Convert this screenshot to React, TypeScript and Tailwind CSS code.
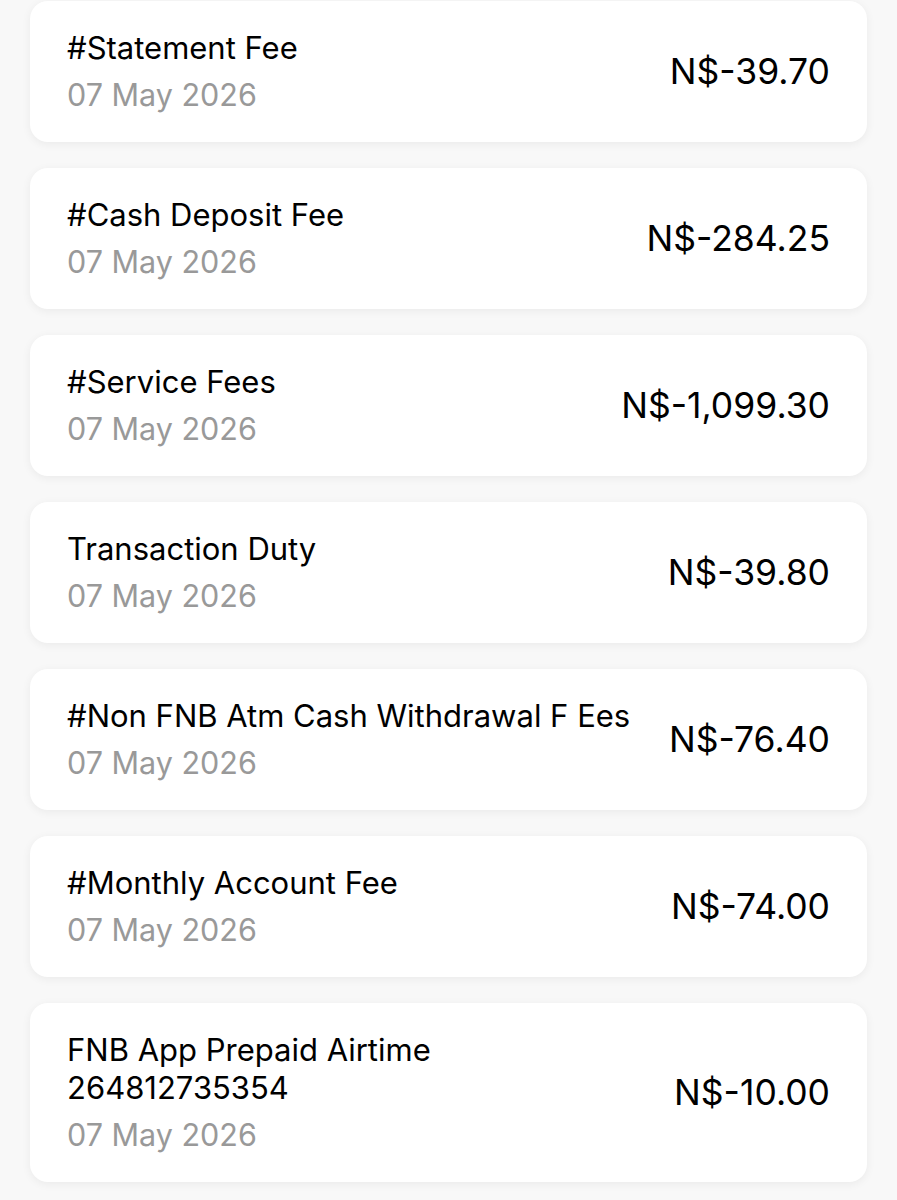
const rows = [
  { title: ["#Statement Fee"], amount: "N$-39.70" },
  { title: ["#Cash Deposit Fee"], amount: "N$-284.25" },
  { title: ["#Service Fees"], amount: "N$-1,099.30" },
  { title: ["Transaction Duty"], amount: "N$-39.80" },
  { title: ["#Non FNB Atm Cash Withdrawal F Ees"], amount: "N$-76.40" },
  { title: ["#Monthly Account Fee"], amount: "N$-74.00" },
  { title: ["FNB App Prepaid Airtime", "264812735354"], amount: "N$-10.00" },
];

const TxCard = ({ title, amount }: { title: string[]; amount: string }) => (
  <div className="flex min-h-[141px] items-center justify-between gap-4 rounded-[18px] bg-white py-[28px] pl-[37px] pr-[37px] shadow-[0_2px_10px_rgba(0,0,0,0.06)]">
    <div className="flex min-w-0 flex-col">
      {title.map((t) => (
        <p key={t} className="whitespace-nowrap text-[31px] leading-[38px] text-black">
          {t}
        </p>
      ))}
      <p className="mt-[9px] text-[30.5px] leading-[38px] text-[#999999]">07 May 2026</p>
    </div>
    <p className="shrink-0 text-[35.5px] leading-[42px] text-black">{amount}</p>
  </div>
);

export default function App() {
  return (
    <div
      className="min-h-screen bg-[#f8f8f8] px-[30px] pt-px pb-6"
      style={{ fontFamily: "Inter, 'Noto Sans', sans-serif" }}
    >
      <div className="flex flex-col gap-[26px]">
        {rows.map((r) => (
          <TxCard key={r.amount} title={r.title} amount={r.amount} />
        ))}
      </div>
    </div>
  );
}
